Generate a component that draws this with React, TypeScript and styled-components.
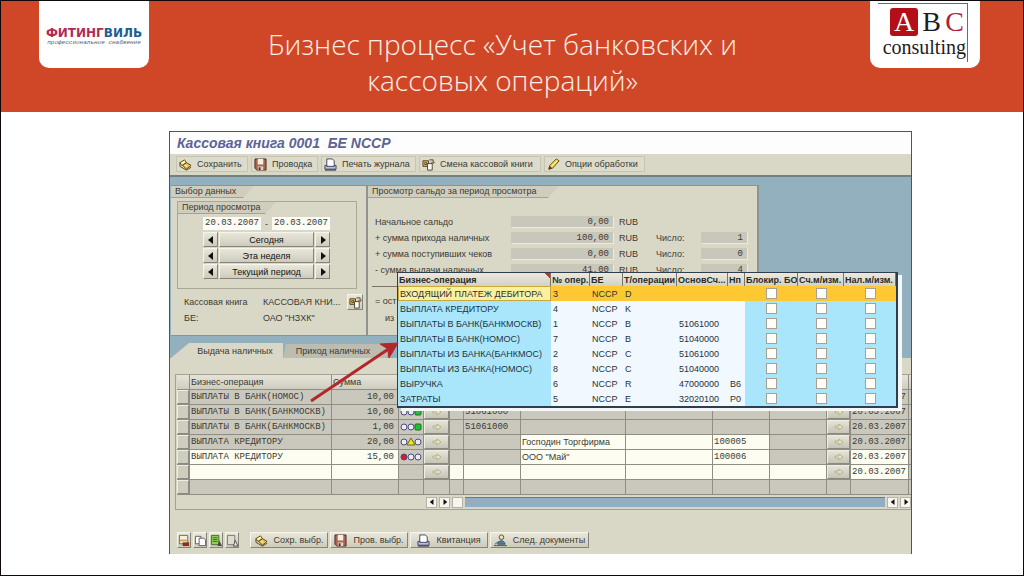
import React from "react";
import styled, { createGlobalStyle } from "styled-components";

const sans = `"Liberation Sans", Arial, sans-serif`;
const mono = `"Liberation Mono", "Courier New", monospace`;
const beige = "#d9d7c6";
const ink = "#3b3a33";

const GlobalStyle = createGlobalStyle`
  *, *::before, *::after { box-sizing: border-box; }
  body { margin: 0; background: #fff; }
  button, input { font: inherit; color: inherit; margin: 0; padding: 0; border-radius: 0; }
`;

const Slide = styled.div`
  min-height: 100vh;
  border: 1px solid #100808;
  background: #fff;
`;

const Header = styled.header`
  display: flex;
  justify-content: space-between;
  align-items: flex-start;
  height: 111px;
  padding: 0 43px 0 38px;
  background: #d04727;
`;

const LogoCard = styled.div`
  flex: 0 0 110px;
  height: 67px;
  border-radius: 0 0 10px 10px;
  background: #fff;
`;

const FitLogo = styled(LogoCard)`
  display: flex;
  flex-direction: column;
  align-items: center;
  padding-top: 25px;
`;

const FitName = styled.div`
  font: bold 12px/14px "DejaVu Sans", sans-serif;
  color: #245a8e;
  white-space: nowrap;
`;

const FitRed = styled.span`
  color: #b02a55;
`;

const FitTag = styled.div`
  font: italic 6px/5px ${mono};
  color: #56607a;
  white-space: nowrap;
`;

const AbcLogo = styled(LogoCard)`
  padding: 2px 12px 0 8px;
`;

const AbcFrame = styled.div`
  display: flex;
  flex-direction: column;
  align-items: flex-end;
  height: 59px;
  border-top: 1px solid #6b6b6b;
  border-right: 1px solid #6b6b6b;
  font-family: "Liberation Serif", "Times New Roman", serif;
  color: #1d1d22;
`;

const AbcLetters = styled.div`
  display: flex;
  gap: 4px;
  padding: 4px 3px 0 0;
  font-size: 28px;
  line-height: 28px;
`;

const AbcLetter = styled.span<{ $color: string; $fill?: string }>`
  width: ${(p) => (p.$fill ? 28 : 19)}px;
  border-radius: 3px;
  text-align: center;
  color: ${(p) => p.$color};
  background: ${(p) => p.$fill || "transparent"};
`;

const AbcWord = styled.div`
  padding-right: 1px;
  font-size: 20px;
  line-height: 22px;
`;

const Title = styled.h1`
  margin: 0;
  padding: 25px 14px 0 0;
  font: 300 28px/36px "Open Sans", "Noto Sans", sans-serif;
  color: #fdeee6;
  text-align: center;
`;

const Body = styled.main`
  padding: 19px 111px 21px 168px;
`;

const Window = styled.section`
  position: relative;
  border: solid #4c5466;
  border-width: 1px 1px 0;
  background: ${beige};
  font: 9px/12px ${sans};
  color: ${ink};
  white-space: nowrap;
`;

const WindowTitle = styled.h2`
  margin: 0;
  padding: 0 7px;
  background: #fdfdfe;
  font: italic bold 14px/22px ${sans};
  color: #5c6496;
  white-space: pre;
`;

const Toolbar = styled.div`
  display: flex;
  gap: 3px;
  height: 23px;
  padding: 2px 6px;
  border-bottom: 2px solid #73807f;
`;

const FlatButton = styled.button<{ $w: number }>`
  display: flex;
  align-items: center;
  gap: 5px;
  width: ${(p) => p.$w}px;
  height: 16px;
  padding: 0 2px;
  border: 1px solid #c7c4b2;
  background: #dddbcb;
  svg { flex: none; }
`;

const RaisedButton = styled.button<{ $w: number }>`
  display: flex;
  align-items: center;
  justify-content: center;
  gap: 6px;
  width: ${(p) => p.$w}px;
  height: 16px;
  border: 1px solid;
  border-color: #f6f5ec #85837a #85837a #f6f5ec;
  background: linear-gradient(#e9e7da, #cdcbbc);
  svg { flex: none; }
`;

const WorkArea = styled.div`
  padding: 8px 0 0 1px;
  background: #93b0bf;
`;

const Panels = styled.div`
  display: flex;
`;

const Panel = styled.div<{ $w: number }>`
  width: ${(p) => p.$w}px;
  height: 151px;
  border: solid #8d938e;
  border-width: 1px 2px 1px 0;
  background: ${beige};
`;

const FolderLabel = styled.div<{ $w: number }>`
  width: ${(p) => p.$w}px;
  height: 12px;
  padding-left: 4px;
  background: #cfcdbd;
  clip-path: polygon(0 0, 100% 0, calc(100% - 11px) 100%, 0 100%);
  border-bottom: 1px solid #a3a193;
  line-height: 10px;
`;

const PeriodBox = styled.fieldset`
  margin: 3px 9px 0 6px;
  padding: 0;
  min-width: 0;
  height: 88px;
  border: 1px solid #a9a798;
`;

const PeriodRows = styled.div`
  display: grid;
  gap: 1px;
  padding: 2px 0 0 25px;
`;

const PeriodRow = styled.div`
  display: flex;
  align-items: center;
  height: 15px;
  gap: 1px;
`;

const DateInput = styled.input`
  width: 58px;
  height: 13px;
  padding: 0 2px;
  border: 0;
  background: #fdfdf8;
  font: 9px/13px ${mono};
`;

const Dash = styled.span`
  width: 9px;
  text-align: center;
`;

const StepButton = styled(RaisedButton)`
  height: 15px;
  color: #111;
`;

const BookGrid = styled.dl`
  display: grid;
  grid-template-columns: 79px 84px 16px;
  grid-auto-rows: 16px;
  align-items: center;
  margin: 5px 0 0 13px;
  dt, dd { margin: 0; }
`;

const BalanceGrid = styled.div`
  display: grid;
  gap: 4px;
  padding: 18px 10px 0 7px;
`;

const BalanceRow = styled.div`
  display: flex;
  align-items: center;
  height: 12px;
`;

const BalanceLabel = styled.label<{ $w: number }>`
  width: ${(p) => p.$w}px;
`;

const ReadOnly = styled.input<{ $w: number }>`
  width: ${(p) => p.$w}px;
  height: 12px;
  padding: 0 4px;
  border: 1px solid;
  border-color: #c9c7b8 #ecebdf #ecebdf #c9c7b8;
  background: #c9c7bb;
  font: 9px/12px ${mono};
  text-align: right;
`;

const Currency = styled.span`
  width: 42px;
  padding-left: 5px;
`;

const Remainder = styled.div`
  margin: 10px 4px 0;
  padding: 6px 3px 0;
  border-top: 1px solid #77766c;
  line-height: 17px;
`;

const Indent = styled.div`
  padding-left: 10px;
`;

const Tabs = styled.div`
  display: flex;
  padding-top: 7px;
`;

const Tab = styled.button<{ $active?: boolean; $w: number }>`
  width: ${(p) => p.$w}px;
  height: 15px;
  border: 0;
  background: ${(p) => (p.$active ? beige : "#bdbcb0")};
  padding: ${(p) => (p.$active ? "0 0 0 16px" : "0 4px 0 0")};
  clip-path: ${(p) =>
    p.$active ? "polygon(18px 0, 100% 0, 100% 100%, 0 100%)" : "polygon(3px 1px, 100% 1px, 100% 100%, 0 100%)"};
`;

const Sheet = styled.div`
  padding: 16px 0 6px 5px;
`;

const TableBox = styled.div`
  height: 136px;
  overflow: hidden;
  border: solid #a2a193;
  border-width: 1px 0 1px 1px;
`;

const Ledger = styled.table`
  width: 100%;
  margin-left: 1px;
  table-layout: fixed;
  border-collapse: separate;
  border-spacing: 0;
  tr { height: 15px; }
  th, td {
    height: 15px;
    padding: 0 1px;
    overflow: hidden;
    border-right: 1px solid #8f8e84;
    border-bottom: 1px solid #8f8e84;
    line-height: 13px;
  }
  th {
    background: linear-gradient(#e6e4d8, #cfcdbe);
    font-weight: normal;
    text-align: left;
  }
`;

const Cell = styled.td<{ $white?: boolean; $mono?: boolean; $right?: boolean; $flush?: boolean }>`
  background: ${(p) => (p.$white ? "#fefdf1" : "#cac8bc")};
  font-family: ${(p) => (p.$mono ? mono : sans)};
  text-align: ${(p) => (p.$right ? "right" : "left")};
  && {
    ${(p) => p.$right && "padding-right: 4px;"}
    ${(p) => p.$flush && "padding: 0;"}
  }
  svg { display: block; }
`;

const Selector = styled.button`
  display: block;
  width: 100%;
  height: 14px;
  border: 1px solid;
  border-color: #efeee4 #8b8a80 #8b8a80 #efeee4;
  background: #cfcdbe;
`;

const GoButton = styled(Selector)`
  background: linear-gradient(#e6e4d8, #c6c4b6);
  svg { margin: 0 auto; }
`;

const ScrollRow = styled.div`
  display: flex;
  align-items: center;
  gap: 2px;
  height: 12px;
  margin-top: 1px;
  padding-left: 250px;
`;

const ScrollButton = styled.button`
  display: flex;
  align-items: center;
  justify-content: center;
  flex: 0 0 11px;
  height: 11px;
  border: 1px solid #b5b3a6;
  background: #f6f5ee;
`;

const ScrollTrack = styled.div`
  flex: 1;
  height: 10px;
  border-top: 1px solid #647b8a;
  background: #93aec0;
`;

const Footer = styled.div`
  display: flex;
  gap: 2px;
  padding: 22px 0 0 2px;
`;

const SmallTools = styled.div`
  display: flex;
  gap: 2px;
  width: 71px;
`;

const Popup = styled.div`
  position: absolute;
  left: 227px;
  top: 140px;
  width: 501px;
  border: 1px solid #2f3e4c;
  border-bottom-width: 2px;
  border-right-width: 2px;
  box-shadow: 4px 3px 0 #f4f7f8;
  background: #f1f8ff;
  color: #1f3340;
`;

const PopupTable = styled.table`
  width: 100%;
  table-layout: fixed;
  border-collapse: separate;
  border-spacing: 0;
  th {
    height: 13px;
    padding: 0 1px;
    overflow: hidden;
    border-right: 1px solid #77766c;
    background: linear-gradient(#eceadf, #d3d1c4);
    font-weight: bold;
    line-height: 12px;
    text-align: left;
    color: #2a2a28;
  }
  th:first-child {
    background: linear-gradient(225deg, #c8302c 4px, transparent 4px), linear-gradient(#eceadf, #d3d1c4);
  }
`;

const PopupRow = styled.tr<{ $selected?: boolean }>`
  td {
    height: 15px;
    padding: 0 2px;
    line-height: 14px;
    ${(p) => p.$selected && "background: #fec832;"}
  }
`;

const PopupCell = styled.td<{ $blue?: boolean; $center?: boolean }>`
  background: ${(p) => (p.$blue ? "#a9e6fc" : "#f1f8ff")};
  text-align: ${(p) => (p.$center ? "center" : "left")};
`;

const NameCell = styled(PopupCell)<{ $focus?: boolean }>`
  &&& {
    padding: 0 0 0 2px;
    ${(p) => p.$focus && "background: #fdf09c; box-shadow: inset 0 0 0 1px #c9a93c;"}
  }
`;

const Tick = styled.input`
  appearance: none;
  display: block;
  width: 11px;
  height: 11px;
  && { margin: 0 auto; }
  border: 1px solid #a99f92;
  background: #fffef8;
`;

const Pointer = styled.svg`
  position: absolute;
  left: 136px;
  top: 206px;
`;

type IconName = "save" | "disk" | "print" | "swap" | "pencil" | "person" | "remove" | "copy" | "all" | "none";

function Icon({ name }: { name: IconName }) {
  return (
    <svg width="13" height="13" viewBox="0 0 14 14" aria-hidden="true">
      {name === "save" && (
        <g stroke="#5b4310" strokeWidth="1">
          <path d="M1 5l5-3 2 3-5 3z" fill="#fff3a0" />
          <path d="M4 8l4-3 5 3-5 4z" fill="#e9c45a" />
          <path d="M1 5v4l7 4 5-3" fill="none" />
          <path d="M6 8l3 1" stroke="#fff8c8" />
        </g>
      )}
      {name === "disk" && (
        <g>
          <path d="M1 1h12v12H3l-2-2z" fill="#a8644c" stroke="#522a20" />
          <path d="M4 1h6v6H4z" fill="#f2eee4" />
          <path d="M4 9h6v4H4z" fill="#d9d2c4" />
          <path d="M5 10h2v3H5z" fill="#522a20" />
        </g>
      )}
      {name === "print" && (
        <g stroke="#3b3f5c">
          <path d="M3 1h6l2 2v7H3z" fill="#fff" />
          <path d="M3 8H1v4h12V8h-2v1H3z" fill="#bcc2de" />
          <path d="M1 13h12" stroke="#23253a" />
        </g>
      )}
      {name === "swap" && (
        <g stroke="#4a4020">
          <path d="M1 3h6v6H1z" fill="#e6b84a" />
          <path d="M6 6h5v7H6z" fill="#fff" />
          <path d="M8 2h4v3M10 4l2 2 2-2" fill="none" />
          <path d="M3 5h2v2H3z" fill="#fff" />
        </g>
      )}
      {name === "pencil" && (
        <g stroke="#5a4a1c">
          <path d="M2 12l1-4 7-7 3 2-7 8z" fill="#f2d55c" />
          <path d="M2 12l1-3 2 2z" fill="#3d3318" />
          <path d="M5 9l6-6" stroke="#fff6b5" />
        </g>
      )}
      {name === "person" && (
        <g stroke="#3c4f63">
          <circle cx="8" cy="3.5" r="2.5" fill="#f3e39a" />
          <path d="M4 11c1-5 7-5 8 0z" fill="#4c7fa8" />
          <path d="M0 12.500h14M1 11l4-3" />
        </g>
      )}
      {name === "remove" && (
        <g>
          <path d="M1.500 1.500h9v9h-9z" fill="#f4efdf" stroke="#6b6455" />
          <path d="M2 6h8v2H2z" fill="#d5a443" />
          <path d="M5 9h7v4H5z" fill="#8f2c20" />
        </g>
      )}
      {name === "copy" && (
        <g fill="#fff" stroke="#5e5c54">
          <path d="M1.500 2.500h6v8h-6z" />
          <path d="M5.500 4.500h5l2 2v6h-7z" />
        </g>
      )}
      {name === "all" && (
        <g>
          <path d="M1.500 1.500h8v10h-8z" fill="#8fd05a" stroke="#3e6b28" />
          <path d="M3 4h5M3 6h5M3 8h5" stroke="#3e6b28" />
          <path d="M8 13l2-6 3 6z" fill="#4d4b43" />
        </g>
      )}
      {name === "none" && (
        <g>
          <path d="M1.500 1.500h8v10h-8z" fill="#dedccf" stroke="#77756a" />
          <path d="M8 13l2-6 3 6z" fill="#e9e7da" stroke="#4d4b43" />
        </g>
      )}
    </svg>
  );
}

function GoArrow() {
  return (
    <svg width="10" height="8" viewBox="0 0 10 8" aria-hidden="true">
      <path d="M1 3h4V1l4 3-4 3V5H1z" fill="#e9e6b8" stroke="#b3b096" strokeWidth="1" />
    </svg>
  );
}

function Triangle({ dir, size = 8 }: { dir: "left" | "right"; size?: number }) {
  return (
    <svg width={size} height={size} viewBox="0 0 8 8" aria-hidden="true">
      <path d={dir === "left" ? "M6 0v8L1 4z" : "M2 0v8l5-4z"} fill="#111" />
    </svg>
  );
}

type Status = "green" | "yellow" | "red";

function Lights({ status }: { status: Status }) {
  return (
    <svg width="22" height="10" viewBox="0 0 22 10" role="img" aria-label={status} stroke="#4a4a7c">
      <circle cx="4" cy="5" r="3" fill={status === "red" ? "#d02020" : "#eceaf2"} />
      {status === "yellow" ? (
        <path d="M11 1l4 7H7z" fill="#f3e52c" stroke="#6b6424" />
      ) : (
        <circle cx="11" cy="5" r="3" fill="#eceaf2" />
      )}
      {status === "green" ? (
        <rect x="15" y="2" width="6" height="6" rx="1" fill="#1fc332" stroke="#1b6a26" />
      ) : (
        <circle cx="18" cy="5" r="3" fill="#eceaf2" />
      )}
    </svg>
  );
}

const toolbar: { icon: IconName; text: string; w: number }[] = [
  { icon: "save", text: "Сохранить", w: 72 },
  { icon: "disk", text: "Проводка", w: 67 },
  { icon: "print", text: "Печать журнала", w: 95 },
  { icon: "swap", text: "Смена кассовой книги", w: 122 },
  { icon: "pencil", text: "Опции обработки", w: 101 },
];

const periods = ["Сегодня", "Эта неделя", "Текущий период"];

const balances = [
  { label: "Начальное сальдо", sum: "0,00", count: null },
  { label: "+ сумма прихода наличных", sum: "100,00", count: "1" },
  { label: "+ сумма поступивших чеков", sum: "0,00", count: "0" },
  { label: "- сумма выдачи наличных", sum: "41,00", count: "4" },
];

type Entry = {
  name: string;
  sum: string;
  status?: Status;
  account?: string;
  partner?: string;
  code?: string;
  date?: string;
  kind: "posted" | "parked" | "open" | "empty" | "blank";
};

const entries: Entry[] = [
  { name: "ВЫПЛАТЫ В БАНК(НОМОС)", sum: "10,00", status: "green", date: "20.03.2007", kind: "posted" },
  { name: "ВЫПЛАТЫ В БАНК(БАНКМОСКВ)", sum: "10,00", status: "green", account: "51061000", date: "20.03.2007", kind: "posted" },
  { name: "ВЫПЛАТЫ В БАНК(БАНКМОСКВ)", sum: "1,00", status: "green", account: "51061000", date: "20.03.2007", kind: "posted" },
  { name: "ВЫПЛАТА КРЕДИТОРУ", sum: "20,00", status: "yellow", partner: "Господин Торгфирма", code: "100005", date: "20.03.2007", kind: "parked" },
  { name: "ВЫПЛАТА КРЕДИТОРУ", sum: "15,00", status: "red", partner: 'ООО "Май"', code: "100006", date: "20.03.2007", kind: "open" },
  { name: "", sum: "", date: "20.03.2007", kind: "empty" },
  { name: "", sum: "", kind: "blank" },
];

const ledgerCols = [13, 142, 67, 25, 26, 14, 57, 105, undefined, 57, 57, 24, 58, 3];

const operations = [
  ["ВХОДЯЩИЙ ПЛАТЕЖ ДЕБИТОРА", "3", "D", "", ""],
  ["ВЫПЛАТА КРЕДИТОРУ", "4", "K", "", ""],
  ["ВЫПЛАТЫ В БАНК(БАНКМОСКВ)", "1", "B", "51061000", ""],
  ["ВЫПЛАТЫ В БАНК(НОМОС)", "7", "B", "51040000", ""],
  ["ВЫПЛАТЫ ИЗ БАНКА(БАНКМОС)", "2", "C", "51061000", ""],
  ["ВЫПЛАТЫ ИЗ БАНКА(НОМОС)", "8", "C", "51040000", ""],
  ["ВЫРУЧКА", "6", "R", "47000000", "B6"],
  ["ЗАТРАТЫ", "5", "E", "32020100", "P0"],
];

const popupHeads = ["Бизнес-операция", "№ опер.", "БЕ", "Т/операции", "ОсновСч...", "Нп", "Блокир. БО", "Сч.м/изм.", "Нал.м/изм."];
const popupCols = [153, 39, 33, 54, 51, 17, 53, 46, undefined];

const smallTools: { icon: IconName; label: string }[] = [
  { icon: "remove", label: "Удалить" },
  { icon: "copy", label: "Копировать" },
  { icon: "all", label: "Выделить все" },
  { icon: "none", label: "Снять выделение" },
];

const footerButtons: { icon: IconName; text: string; w: number }[] = [
  { icon: "save", text: "Сохр. выбр.", w: 78 },
  { icon: "disk", text: "Пров. выбр.", w: 78 },
  { icon: "print", text: "Квитанция", w: 78 },
  { icon: "person", text: "След. документы", w: 99 },
];

function LedgerRow({ e }: { e: Entry }) {
  const open = e.kind === "open" || e.kind === "empty";
  const partner = open || e.kind === "parked";
  const arrow = e.kind !== "blank";
  return (
    <tr>
      <Cell $flush>
        <Selector aria-label="Выбрать строку" />
      </Cell>
      <Cell $mono $white={open}>{e.name}</Cell>
      <Cell $mono $right $white={open}>{e.sum}</Cell>
      <Cell>{e.status && <Lights status={e.status} />}</Cell>
      <Cell $flush>{arrow && <GoButton aria-label="Подробно"><GoArrow /></GoButton>}</Cell>
      <Cell $white={e.kind === "empty"} />
      <Cell $mono $white={e.kind === "empty"}>{e.account}</Cell>
      <Cell $white={partner}>{e.partner}</Cell>
      <Cell $white={partner} />
      <Cell $mono $white={partner}>{e.code}</Cell>
      <Cell $white={e.kind === "empty"} />
      <Cell $flush>{arrow && <GoButton aria-label="Подробно"><GoArrow /></GoButton>}</Cell>
      <Cell $mono $white={open}>{e.date}</Cell>
      <Cell />
    </tr>
  );
}

export default function App() {
  return (
    <Slide>
      <GlobalStyle />
      <Header>
        <FitLogo>
          <FitName><FitRed>ФИТИНГ</FitRed>ВИЛЬ</FitName>
          <FitTag>профессиональное снабжение</FitTag>
        </FitLogo>
        <Title>Бизнес процесс «Учет банковских и<br />кассовых операций»</Title>
        <AbcLogo>
          <AbcFrame>
            <AbcLetters>
              <AbcLetter $color="#fff" $fill="#b40f18">A</AbcLetter>
              <AbcLetter $color="#1d1d22">B</AbcLetter>
              <AbcLetter $color="#b0203c">C</AbcLetter>
            </AbcLetters>
            <AbcWord>consulting</AbcWord>
          </AbcFrame>
        </AbcLogo>
      </Header>
      <Body>
        <Window>
          <WindowTitle>{"Кассовая книга 0001  БЕ NCCP"}</WindowTitle>
          <Toolbar>
            {toolbar.map((b) => (
              <FlatButton key={b.text} $w={b.w}><Icon name={b.icon} />{b.text}</FlatButton>
            ))}
          </Toolbar>
          <WorkArea>
            <Panels>
              <Panel $w={197}>
                <FolderLabel $w={83}>Выбор данных</FolderLabel>
                <PeriodBox aria-label="Период просмотра">
                  <FolderLabel $w={98}>Период просмотра</FolderLabel>
                  <PeriodRows>
                    <PeriodRow>
                      <DateInput aria-label="Дата с" defaultValue="20.03.2007" />
                      <Dash>-</Dash>
                      <DateInput aria-label="Дата по" defaultValue="20.03.2007" />
                    </PeriodRow>
                    {periods.map((p) => (
                      <PeriodRow key={p}>
                        <StepButton $w={15} aria-label="Назад"><Triangle dir="left" /></StepButton>
                        <StepButton $w={95}>{p}</StepButton>
                        <StepButton $w={15} aria-label="Вперед"><Triangle dir="right" /></StepButton>
                      </PeriodRow>
                    ))}
                  </PeriodRows>
                </PeriodBox>
                <BookGrid>
                  <dt>Кассовая книга</dt>
                  <dd>КАССОВАЯ КНИ...</dd>
                  <dd><RaisedButton $w={16} aria-label="Сменить книгу"><Icon name="swap" /></RaisedButton></dd>
                  <dt>БЕ:</dt>
                  <dd>ОАО "НЗХК"</dd>
                </BookGrid>
              </Panel>
              <Panel $w={391}>
                <FolderLabel $w={191}>Просмотр сальдо за период просмотра</FolderLabel>
                <BalanceGrid>
                  {balances.map((b, i) => (
                    <BalanceRow key={b.label}>
                      <BalanceLabel $w={136} htmlFor={`sum${i}`}>{b.label}</BalanceLabel>
                      <ReadOnly $w={103} id={`sum${i}`} readOnly value={b.sum} />
                      <Currency>RUB</Currency>
                      {b.count !== null && (
                        <>
                          <BalanceLabel $w={45} htmlFor={`count${i}`}>Число:</BalanceLabel>
                          <ReadOnly $w={47} id={`count${i}`} readOnly value={b.count} />
                        </>
                      )}
                    </BalanceRow>
                  ))}
                </BalanceGrid>
                <Remainder>
                  = ост
                  <Indent>из</Indent>
                </Remainder>
              </Panel>
            </Panels>
            <Tabs role="tablist">
              <Tab role="tab" aria-selected $active $w={112}>Выдача наличных</Tab>
              <Tab role="tab" $w={104}>Приход наличных</Tab>
            </Tabs>
          </WorkArea>
          <Sheet>
            <TableBox>
              <Ledger>
                <colgroup>
                  {ledgerCols.map((w, i) => <col key={i} width={w} />)}
                </colgroup>
                <thead>
                  <tr>
                    <th />
                    <th scope="col">Бизнес-операция</th>
                    <th scope="col">Сумма</th>
                    {ledgerCols.slice(3).map((_, i) => <th key={i} />)}
                  </tr>
                </thead>
                <tbody>
                  {entries.map((e, i) => <LedgerRow key={i} e={e} />)}
                </tbody>
              </Ledger>
              <ScrollRow>
                <ScrollButton aria-label="В начало"><Triangle dir="left" size={6} /></ScrollButton>
                <ScrollButton aria-label="Вправо"><Triangle dir="right" size={6} /></ScrollButton>
                <ScrollButton aria-label="Ползунок" />
                <ScrollTrack />
                <ScrollButton aria-label="Влево"><Triangle dir="left" size={6} /></ScrollButton>
                <ScrollButton aria-label="В конец"><Triangle dir="right" size={6} /></ScrollButton>
              </ScrollRow>
            </TableBox>
            <Footer>
              <SmallTools>
                {smallTools.map((t) => (
                  <RaisedButton key={t.icon} $w={14} aria-label={t.label}><Icon name={t.icon} /></RaisedButton>
                ))}
              </SmallTools>
              {footerButtons.map((b) => (
                <RaisedButton key={b.text} $w={b.w}><Icon name={b.icon} />{b.text}</RaisedButton>
              ))}
            </Footer>
          </Sheet>
          <Popup>
            <PopupTable>
              <colgroup>
                {popupCols.map((w, i) => <col key={i} width={w} />)}
              </colgroup>
              <thead>
                <tr>{popupHeads.map((h) => <th key={h} scope="col">{h}</th>)}</tr>
              </thead>
              <tbody>
                {operations.map(([name, num, type, account, tax], i) => (
                  <PopupRow key={name} $selected={i === 0}>
                    <NameCell $blue $focus={i === 0}>{name}</NameCell>
                    <PopupCell>{num}</PopupCell>
                    <PopupCell>NCCP</PopupCell>
                    <PopupCell>{type}</PopupCell>
                    <PopupCell>{account}</PopupCell>
                    <PopupCell>{tax}</PopupCell>
                    {popupHeads.slice(6).map((h) => (
                      <PopupCell key={h} $blue $center>
                        <Tick type="checkbox" aria-label={`${name}: ${h}`} />
                      </PopupCell>
                    ))}
                  </PopupRow>
                ))}
              </tbody>
            </PopupTable>
          </Popup>
          <Pointer width="96" height="70" viewBox="0 0 96 70" aria-hidden="true">
            <path d="M5 63L84 10" stroke="#b3272b" strokeWidth="3" fill="none" />
            <path d="M92 5L74 6l8 5 1 9z" fill="#b3272b" stroke="#b3272b" strokeWidth="1" />
          </Pointer>
        </Window>
      </Body>
    </Slide>
  );
}
